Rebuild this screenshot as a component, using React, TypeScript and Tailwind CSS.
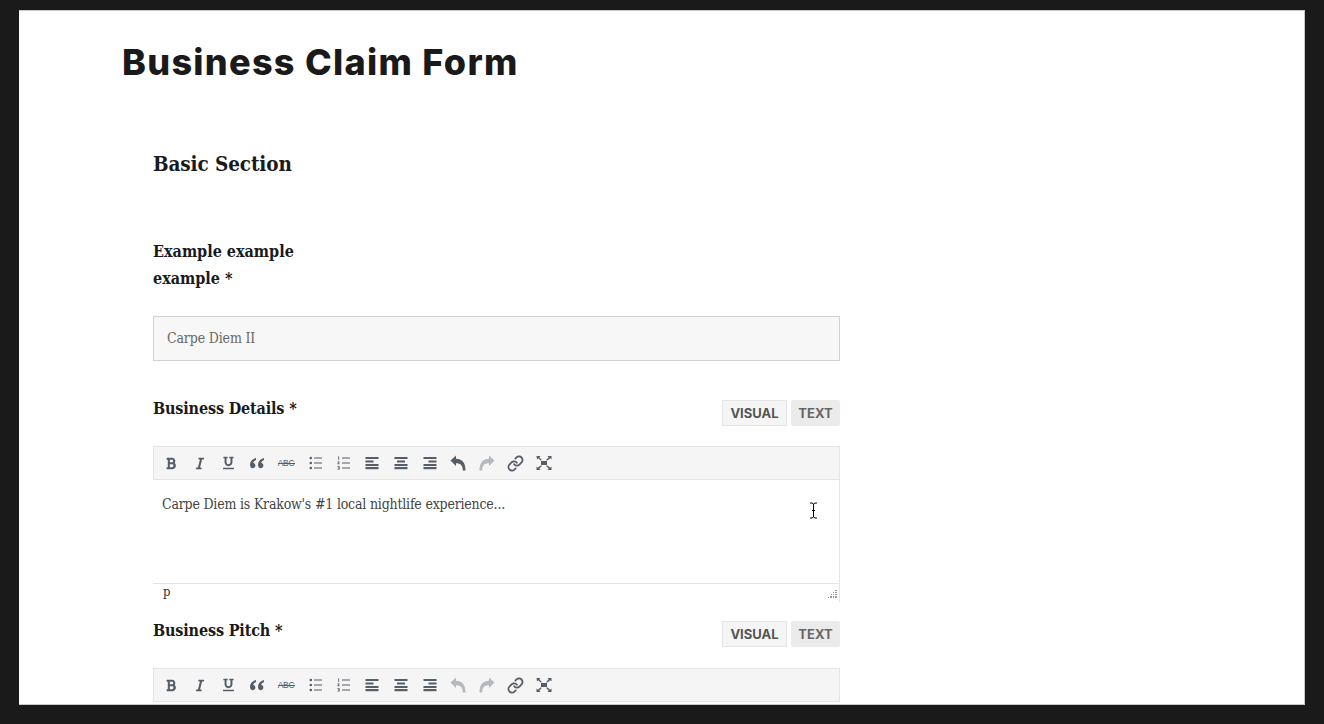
import React from "react";
import { Link } from "lucide-react";
import { FaBold, FaItalic, FaUnderline } from "react-icons/fa";

const Svg = ({ children, className = "" }: { children: React.ReactNode; className?: string }) => (
  <svg viewBox="0 0 20 20" className={`w-5 h-5 ${className}`} fill="currentColor">
    {children}
  </svg>
);

const Lines = ({ rows }: { rows: number[][] }) => (
  <Svg>
    {rows.map(([x, y, w, h], i) => (
      <rect key={i} x={x} y={y} width={w} height={h} />
    ))}
  </Svg>
);

const Quote = () => (
  <Svg>
    <path d="M9 5C5.200 6 3 8.400 3 11.700 3 14 4.100 15.200 5.800 15.200c1.500 0 2.600-1.100 2.600-2.600 0-1.400-.9-2.400-2.200-2.500.2-1.200 1.200-2.200 2.800-3L9 5zM17 5c-3.800 1-6 3.400-6 6.700 0 2.300 1.100 3.500 2.800 3.500 1.500 0 2.600-1.100 2.600-2.600 0-1.400-.9-2.400-2.200-2.500.2-1.200 1.200-2.200 2.800-3L17 5z" />
  </Svg>
);

const BulletList = () => (
  <Svg>
    <circle cx="5.800" cy="5" r="1.300" />
    <circle cx="5.800" cy="10" r="1.300" />
    <circle cx="5.800" cy="15" r="1.300" />
    <rect x="9" y="4.500" width="8" height="1" />
    <rect x="9" y="9.500" width="8" height="1" />
    <rect x="9" y="14.500" width="8" height="1" />
  </Svg>
);

const NumberList = () => (
  <Svg>
    <path d="M5 3.500h1.100v3.500h-.8V4.300H5zM4.400 8.500h2.200v.7L5.400 10.500h1.300v.7H4.400v-.7l1.300-1.300H4.400zM4.400 13.200h2.300v3.300H4.400v-.7h1.500v-.6h-1v-.6h1v-.7H4.400z" />
    <rect x="9" y="4.500" width="8" height="1" />
    <rect x="9" y="9.500" width="8" height="1" />
    <rect x="9" y="14.500" width="8" height="1" />
  </Svg>
);

const Undo = () => (
  <Svg>
    <path d="M2.500 7.500 8 2.500v3.300c5.500 0 9.500 3.400 9.500 11.700h-2.700c0-5-2-7.300-6.800-7.300V13z" />
  </Svg>
);

const Redo = () => (
  <Svg>
    <path d="M17.500 7.500 12 2.500v3.300c-5.500 0-9.500 3.400-9.500 11.700h2.700c0-5 2-7.300 6.800-7.300V13z" />
  </Svg>
);

const Fullscreen = () => (
  <Svg>
    <path d="M2.500 3h4L5.300 4.200 7.800 7 7 7.800 4.200 5.300 3 6.500zM17.500 3v3.500l-1.200-1.200L13 7.800 12.200 7l2.500-2.800L13.500 3zM2.500 17v-3.500l1.200 1.200L7 12.200l.8.8-2.500 2.800L6.500 17zM17.500 17h-4l1.200-1.200-2.500-2.800.8-.8 3.300 2.500 1.200-1.200z" />
    <rect x="7" y="8" width="6" height="4" />
  </Svg>
);

const Toolbar = ({ undoActive }: { undoActive: boolean }) => {
  const items: React.ReactNode[] = [
    <FaBold className="w-[12px] h-[13px]" />,
    <FaItalic className="w-[10px] h-[13px]" />,
    <FaUnderline className="w-[11px] h-[14px]" />,
    <Quote />,
    <span className="relative font-['Liberation_Sans',sans-serif] text-[8.500px] leading-none tracking-[-0.2px]">
      ABC
      <span className="absolute left-0 right-0 top-[4px] h-px bg-[#555d66]" />
    </span>,
    <BulletList />,
    <NumberList />,
    <Lines rows={[[3.500, 4, 13, 2], [3.500, 7.500, 8, 2], [3.500, 11, 13, 2], [3.500, 14, 13, 2.200]]} />,
    <Lines rows={[[3.500, 4, 13, 2], [6, 7.500, 8, 2], [3.500, 11, 13, 2], [3.500, 14, 13, 2.200]]} />,
    <Lines rows={[[3.500, 4, 13, 2], [8.500, 7.500, 8, 2], [3.500, 11, 13, 2], [3.500, 14, 13, 2.200]]} />,
    <span className={undoActive ? "text-[#555d66]" : "text-[#b4b9be]"}>
      <Undo />
    </span>,
    <span className="text-[#b4b9be]">
      <Redo />
    </span>,
    <Link className="w-[17px] h-[17px]" strokeWidth={2.500} />,
    <Fullscreen />,
  ];
  return (
    <div className="h-[34px] bg-[#f5f5f5] border border-[#e5e5e5] flex items-center pl-[3px] text-[#555d66]">
      {items.map((icon, i) => (
        <div key={i} className="w-[28.700px] flex items-center justify-center">
          {icon}
        </div>
      ))}
    </div>
  );
};

const EditorHead = ({ label, tabsClass }: { label: string; tabsClass: string }) => (
  <div className="flex justify-between">
    <h3 className="font-['DejaVu_Serif_Condensed',serif] font-bold text-[16px] leading-[28px] text-[#1a1a1a] tracking-[-0.15px]">
      {label}
    </h3>
    <div className={`flex gap-1 font-['Inter',sans-serif] font-bold text-[13px] leading-none text-[#555] ${tabsClass}`}>
      <span className="w-[65px] h-[26px] flex items-center justify-center bg-[#f5f5f5] border border-[#e5e5e5]">
        VISUAL
      </span>
      <span className="w-[49px] h-[26px] flex items-center justify-center bg-[#ebebeb] rounded-[2px] text-[#666]">
        TEXT
      </span>
    </div>
  </div>
);

export default function App() {
  return (
    <div className="h-[724px] overflow-hidden bg-[#1a1a1a] pt-[10px] pb-[19px] px-[19px]">
      <div className="h-[695px] overflow-hidden bg-white pl-[103px] border-t border-b border-r border-[#c8c8c8]">
        <h1 className="font-['Inter',sans-serif] font-extrabold text-[36px] leading-[42px] tracking-[1.300px] text-[#1a1a1a] pt-[30px] h-[74px] box-content">
          Business Claim Form
        </h1>
        <div className="pl-[31px] w-[718px] mt-[-2px]">
          <h2 className="font-['DejaVu_Serif_Condensed',serif] font-bold text-[20.500px] leading-[30px] text-[#1a1a1a] tracking-[-0.1px] mt-[36px]">
            Basic Section
          </h2>
          <label className="block font-['DejaVu_Serif_Condensed',serif] font-bold text-[16px] leading-[27px] text-[#1a1a1a] mt-[59px]">
            Example example
            <br />
            example *
          </label>
          <div className="mt-[24px] h-[45px] bg-[#f7f7f7] border border-[#d1d1d1] flex items-center pl-[13px] font-['DejaVu_Serif_Condensed',serif] text-[14px] text-[#686868] tracking-[-0.15px]">
            Carpe Diem II
          </div>
          <div className="mt-[34px]">
            <EditorHead label="Business Details *" tabsClass="pt-[5px]" />
          </div>
          <div className="mt-[20px]">
            <Toolbar undoActive />
            <div className="h-[103px] border-r border-[#e5e5e5] pl-[9px] pt-[13px] font-['DejaVu_Serif_Condensed',serif] text-[14px] leading-[22px] text-[#444] tracking-[-0.2px]">
              Carpe Diem is Krakow's #1 local nightlife experience...
            </div>
            <div className="relative h-[19px] border-t border-r border-[#e5e5e5] pl-[10px] font-['DejaVu_Serif_Condensed',serif] text-[13px] leading-[16px] text-[#333]">
              p
              <svg viewBox="0 0 9 8" className="absolute right-[2px] bottom-[4px] w-[9px] h-[8px] text-[#999]" fill="currentColor">
                <path d="M7 0h2v1H7zM5 2h1v1H5zM7 2h2v1H7zM3 4h1v1H3zM5 4h1v1H5zM7 4h2v1H7zM0 7h1v1H0zM2 6h2v2H2zM5 6h1v2H5zM7 6h2v2H7z" />
              </svg>
            </div>
          </div>
          <div className="mt-[15px]">
            <EditorHead label="Business Pitch *" tabsClass="pt-[4px]" />
          </div>
          <div className="mt-[21px]">
            <Toolbar undoActive={false} />
          </div>
        </div>
      </div>
      {/* text cursor */}
      <svg viewBox="0 0 9 17" className="absolute left-[809px] top-[502px] w-[9px] h-[17px] text-black" fill="none" stroke="currentColor">
        <path d="M1 1h2l1.500 1L6 1h2M4.500 2v13M1 16h2l1.500-1L6 16h2M3 8.500h3" />
      </svg>
    </div>
  );
}
